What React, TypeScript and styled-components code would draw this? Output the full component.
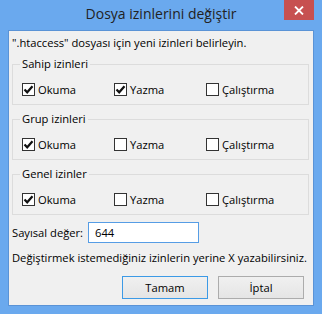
import { FC } from 'react'
import styled, { createGlobalStyle } from 'styled-components'

const GlobalStyle = createGlobalStyle`
  html, body {
    margin: 0;
    padding: 0;
    background: #6aa9ee;
  }
  * {
    box-sizing: border-box;
  }
`

const Window = styled.div`
  width: 322px;
  height: 314px;
  display: flex;
  flex-direction: column;
  background: #6aa9ee;
  font-family: 'Open Sans', 'Liberation Sans', sans-serif;
  font-size: 11.2px;
  color: #000;
`

const TitleBar = styled.div`
  height: 30px;
  display: grid;
  grid-template-columns: 1fr auto 1fr;
`

const Title = styled.div`
  grid-column: 2;
  font-size: 14px;
  line-height: 28px;
  color: #222;
`

const CloseButton = styled.div`
  grid-column: 3;
  justify-self: end;
  align-self: start;
  width: 30px;
  height: 20px;
  margin-right: 8px;
  background: #c75050;
  display: flex;
  align-items: center;
  justify-content: center;
`

const Client = styled.div`
  flex: 1;
  margin: 0 8px 8px 8px;
  border: 1px solid #5a93d6;
  background: #f0f0f0;
  padding: 4px 4px 0 3px;
  display: flex;
  flex-direction: column;
`

const Line = styled.div<{ $top?: number }>`
  line-height: 15px;
  height: 15px;
  white-space: nowrap;
  margin-top: ${(p) => p.$top ?? 0}px;
`

const Group = styled.fieldset<{ $top: number }>`
  margin: ${(p) => p.$top}px 0 0 0;
  padding: 0 0 7px 9px;
  border: 1px solid #dcdcdc;
  min-width: 0;
`

const Legend = styled.legend`
  padding: 0 2px;
  margin-left: -2px;
  line-height: 14px;
  height: 14px;
`

const CheckRow = styled.div`
  margin-top: 11px;
  height: 15px;
  display: grid;
  grid-template-columns: 92px 92px 1fr;
`

const CheckItem = styled.label`
  display: flex;
  align-items: center;
  gap: 3px;
  line-height: 15px;
`

const Box = styled.span`
  width: 13px;
  height: 13px;
  border: 1px solid #333;
  background: #fff;
  display: flex;
  align-items: center;
  justify-content: center;
`

const ValueRow = styled.div`
  margin-top: 7px;
  display: flex;
  align-items: center;
  height: 21px;
`

const ValueLabel = styled.span`
  width: 76px;
  white-space: nowrap;
`

const ValueInput = styled.div`
  width: 111px;
  height: 21px;
  border: 1px solid #569de5;
  background: #fff;
  padding-left: 6px;
  line-height: 19px;
`

const Buttons = styled.div`
  margin-top: 11px;
  margin-right: 5px;
  display: flex;
  justify-content: flex-end;
  gap: 10px;
`

const Button = styled.div<{ $default?: boolean }>`
  width: 86px;
  height: 23px;
  border: 1px solid ${(p) => (p.$default ? '#3c9ae6' : '#acacac')};
  background: linear-gradient(#f0f0f0, #e5e5e5);
  display: flex;
  align-items: center;
  justify-content: center;
`

const Check: FC<{ checked: boolean; label: string }> = ({ checked, label }) => (
  <CheckItem>
    <Box>
      {checked && (
        <svg width="11" height="11" viewBox="0 0 11 11">
          <polyline points="1.5,5.5 4.2,8.3 9.5,2.2" fill="none" stroke="#111" strokeWidth="2.2" />
        </svg>
      )}
    </Box>
    {label}
  </CheckItem>
)

const groups = [
  { title: 'Sahip izinleri', values: [true, true, false] },
  { title: 'Grup izinleri', values: [true, false, false] },
  { title: 'Genel izinler', values: [true, false, false] },
]

const labels = ['Okuma', 'Yazma', 'Çalıştırma']

const App: FC = () => {
  return (
    <Window>
      <GlobalStyle />
      <TitleBar>
        <Title>Dosya izinlerini değiştir</Title>
        <CloseButton>
          <svg width="10" height="9" viewBox="0 0 10 9">
            <path d="M1 0.5 L9 8.5 M9 0.5 L1 8.5" stroke="#fff" strokeWidth="1.8" />
          </svg>
        </CloseButton>
      </TitleBar>
      <Client>
        <Line>".htaccess" dosyası için yeni izinleri belirleyin.</Line>
        {groups.map((g) => (
          <Group key={g.title} $top={7}>
            <Legend>{g.title}</Legend>
            <CheckRow>
              {labels.map((l, j) => (
                <Check key={l} checked={g.values[j]} label={l} />
              ))}
            </CheckRow>
          </Group>
        ))}
        <ValueRow>
          <ValueLabel>Sayısal değer:</ValueLabel>
          <ValueInput>644</ValueInput>
        </ValueRow>
        <Line $top={7}>Değiştirmek istemediğiniz izinlerin yerine X yazabilirsiniz.</Line>
        <Buttons>
          <Button $default>Tamam</Button>
          <Button>İptal</Button>
        </Buttons>
      </Client>
    </Window>
  )
}

export default App
